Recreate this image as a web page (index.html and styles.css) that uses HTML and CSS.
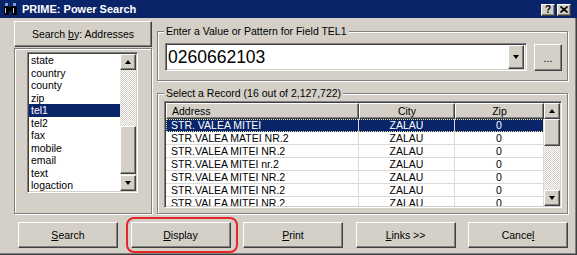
FILE: index.html
```html
<!DOCTYPE html>
<html lang="en">
<head>
    <meta charset="UTF-8">
    <title>PRIME: Power Search</title>
    <link rel="stylesheet" href="styles.css">
</head>
<body>
    <div class="window">
        <div class="titlebar">
            <svg class="app-icon" viewBox="0 0 15 14">
                <rect x="1" y="4" width="5" height="9" rx="1" fill="#000"/>
                <rect x="9" y="4" width="5" height="9" rx="1" fill="#000"/>
                <rect x="5" y="5" width="5" height="4" fill="#000"/>
                <rect x="2" y="1" width="3" height="3" fill="#7d9be0"/>
                <rect x="10" y="1" width="3" height="3" fill="#7d9be0"/>
                <rect x="2" y="6" width="1" height="5" fill="#c8d4f0"/>
                <rect x="10" y="6" width="1" height="5" fill="#c8d4f0"/>
            </svg>
            <span class="title">PRIME: Power Search</span>
            <div class="caption-btns">
                <span class="cap-btn">?</span>
                <span class="cap-btn">
                    <svg width="8" height="7" viewBox="0 0 8 7"><path d="M0.5 0.5 L7.5 6.5 M7.5 0.5 L0.5 6.5" stroke="#000" stroke-width="1.6"/></svg>
                </span>
            </div>
        </div>

        <div class="content">
            <div class="left-col">
                <div class="btn raised search-by"><span>Search <u>b</u>y: Addresses</span></div>
                <div class="panel etched">
                    <div class="listbox sunken">
                        <ul class="items">
                            <li>state</li>
                            <li>country</li>
                            <li>county</li>
                            <li>zip</li>
                            <li class="sel">tel1</li>
                            <li>tel2</li>
                            <li>fax</li>
                            <li>mobile</li>
                            <li>email</li>
                            <li>text</li>
                            <li>logaction</li>
                        </ul>
                        <div class="vscroll">
                            <div class="sb-btn raised"><span class="arrow-up"></span></div>
                            <div class="sb-track thumb-bottom"><div class="sb-thumb raised left-thumb"></div></div>
                            <div class="sb-btn raised"><span class="arrow-down"></span></div>
                        </div>
                    </div>
                </div>
            </div>

            <div class="right-col">
                <div class="group etched value-group">
                    <div class="legend">Enter a Value or Pattern for Field TEL1</div>
                    <div class="value-row">
                        <div class="combo sunken">
                            <span class="combo-text">0260662103</span>
                            <span class="drop-btn raised"><span class="arrow-down"></span></span>
                        </div>
                        <div class="btn raised dots"><span>...</span></div>
                    </div>
                </div>

                <div class="group etched record-group">
                    <div class="legend">Select a Record (16 out of 2,127,722)</div>
                    <div class="listview sunken">
                        <div class="lv-body">
                            <table class="records">
                                <colgroup>
                                    <col class="c-address">
                                    <col class="c-city">
                                    <col class="c-zip">
                                </colgroup>
                                <thead>
                                    <tr><th class="left">Address</th><th>City</th><th>Zip</th></tr>
                                </thead>
                                <tbody>
                                    <tr class="sel"><td class="left">STR. VALEA MITEI</td><td>ZALAU</td><td>0</td></tr>
                                    <tr><td class="left">STR.VALEA MATEI NR.2</td><td>ZALAU</td><td>0</td></tr>
                                    <tr><td class="left">STR.VALEA MITEI NR.2</td><td>ZALAU</td><td>0</td></tr>
                                    <tr><td class="left">STR.VALEA MITEI nr.2</td><td>ZALAU</td><td>0</td></tr>
                                    <tr><td class="left">STR.VALEA MITEI NR.2</td><td>ZALAU</td><td>0</td></tr>
                                    <tr><td class="left">STR.VALEA MITEI NR.2</td><td>ZALAU</td><td>0</td></tr>
                                    <tr><td class="left">STR.VALEA MITEI NR.2</td><td>ZALAU</td><td>0</td></tr>
                                </tbody>
                            </table>
                        </div>
                        <div class="vscroll">
                            <div class="sb-btn raised"><span class="arrow-up"></span></div>
                            <div class="sb-track"><div class="sb-thumb raised lv-thumb"></div></div>
                            <div class="sb-btn raised"><span class="arrow-down"></span></div>
                        </div>
                    </div>
                </div>
            </div>
        </div>

        <div class="actions">
            <div class="btn raised action"><span><u>S</u>earch</span></div>
            <div class="btn raised action marked"><span><u>D</u>isplay</span></div>
            <div class="btn raised action"><span><u>P</u>rint</span></div>
            <div class="btn raised action"><span><u>L</u>inks &gt;&gt;</span></div>
            <div class="btn raised action"><span>Cance<u>l</u></span></div>
        </div>
    </div>
</body>
</html>
```

FILE: styles.css
```css
body {
    margin: 0;
    font-family: "Liberation Sans", Arial, sans-serif;
    font-size: 10.5px;
    color: #000;
}
.window {
    width: 577px;
    height: 255px;
    box-sizing: border-box;
    background-color: #d4d0c8;
    box-shadow: inset -1px -1px #404040, inset -2px -2px #808080;
    overflow: hidden;
}

/* title bar */
.titlebar {
    height: 18px;
    background-color: #0a246a;
    display: flex;
    align-items: center;
    padding: 0 6px 0 3px;
    color: white;
}
.app-icon {
    width: 15px;
    height: 14px;
    margin-right: 4px;
}
.title {
    flex: 1;
    font-weight: bold;
    font-size: 11px;
}
.caption-btns {
    display: flex;
    gap: 2px;
    margin-top: 1px;
}
.cap-btn {
    width: 14px;
    height: 12px;
    box-sizing: border-box;
    background-color: #d4d0c8;
    border: 1px solid;
    border-color: #fff #404040 #404040 #fff;
    box-shadow: inset -1px -1px #808080;
    display: flex;
    align-items: center;
    justify-content: center;
    color: #000;
    font-weight: bold;
    font-size: 10px;
}

/* 3d borders */
.raised {
    border: 1px solid;
    border-color: #fff #404040 #404040 #fff;
    box-shadow: inset -1px -1px #808080;
    background-color: #d4d0c8;
    box-sizing: border-box;
}
.sunken {
    border: 1px solid;
    border-color: #808080 #fff #fff #808080;
    box-shadow: inset 1px 1px #404040, inset -1px -1px #d4d0c8;
    padding: 1px;
    box-sizing: border-box;
    background-color: white;
}
.etched {
    border: 1px solid #808080;
    box-shadow: inset 1px 1px #fff, 1px 1px #fff;
    box-sizing: border-box;
}
.btn {
    display: flex;
    align-items: center;
    justify-content: center;
}

/* layout */
.content {
    display: flex;
    gap: 5px;
    padding: 3px 0 0 14px;
    height: 193px;
}
.left-col {
    width: 138px;
    display: flex;
    flex-direction: column;
}
.search-by {
    height: 26px;
}
.panel {
    margin-top: 1px;
    height: 166px;
    padding: 3px 0 0 12px;
}
.right-col {
    width: 411px;
}

/* left list */
.listbox {
    width: 111px;
    height: 141px;
    display: flex;
}
.items {
    list-style: none;
    margin: 0;
    padding: 0;
    flex: 1;
    overflow: hidden;
}
.items li {
    height: 12.5px;
    line-height: 12.5px;
    padding-left: 2px;
}
.items li.sel {
    background-color: #0a246a;
    color: white;
}

/* scrollbars */
.vscroll {
    width: 16px;
    display: flex;
    flex-direction: column;
}
.sb-btn {
    height: 16px;
    display: flex;
    align-items: center;
    justify-content: center;
}
.sb-track {
    flex: 1;
    display: flex;
    flex-direction: column;
    background-color: #fff;
    background-image: repeating-conic-gradient(#d4d0c8 0 25%, #fff 0 50%);
    background-size: 2px 2px;
}
.thumb-bottom {
    justify-content: flex-end;
}
.sb-thumb {
    width: 16px;
}
.left-thumb {
    height: 48px;
    margin-bottom: 1px;
}
.lv-thumb {
    height: 27px;
}
.arrow-up,
.arrow-down {
    width: 0;
    height: 0;
    border: solid transparent;
}
.arrow-up {
    border-width: 0 3.5px 4px;
    border-bottom-color: #000;
}
.arrow-down {
    border-width: 4px 3.5px 0;
    border-top-color: #000;
}

/* group boxes */
.group {
    padding: 0 6px 0 6px;
}
.legend {
    margin: -7px 0 0 0;
    padding: 0 2px;
    width: fit-content;
    height: 12px;
    line-height: 12px;
    background-color: #d4d0c8;
}
.value-group {
    margin-top: 10px;
    height: 50px;
}
.value-row {
    display: flex;
    gap: 7px;
    margin-top: 6px;
}
.combo {
    flex: 1;
    height: 28px;
    display: flex;
    align-items: center;
    margin-left: 1px;
}
.combo-text {
    flex: 1;
    padding-left: 1px;
    font-size: 17.5px;
}
.drop-btn {
    width: 16px;
    height: 24px;
    display: flex;
    align-items: center;
    justify-content: center;
    margin-right: 1px;
}
.dots {
    width: 28px;
    height: 27px;
    margin-top: 1px;
    margin-right: -1px;
}

.record-group {
    margin-top: 12px;
    height: 121px;
}
.listview {
    margin-top: 2px;
    height: 107px;
    width: 398px;
    display: flex;
}
.lv-body {
    flex: 1;
    overflow: hidden;
}
.records {
    width: 378px;
    table-layout: fixed;
    border-collapse: separate;
    border-spacing: 0;
}
.c-address { width: 193px; }
.c-city { width: 96px; }
.c-zip { width: 89px; }
.records th {
    height: 16px;
    box-sizing: border-box;
    padding: 0 4px;
    font-weight: normal;
    text-align: center;
    background-color: #d4d0c8;
    border: 1px solid;
    border-color: #fff #404040 #404040 #fff;
    box-shadow: inset -1px -1px #808080;
    line-height: 13px;
}
.records td {
    height: 13px;
    box-sizing: border-box;
    padding: 0 4px;
    line-height: 12px;
    text-align: center;
    white-space: nowrap;
    overflow: hidden;
    border-bottom: 1px solid #dcdad5;
    border-right: 1px solid #dcdad5;
}
.records .left {
    text-align: left;
    padding-left: 5px;
}
.records tr.sel td {
    background-color: #0a246a;
    color: white;
    border-bottom-color: #0a246a;
}
.records tr.sel {
    outline: 1px dotted #e8e8a0;
    outline-offset: -1px;
}

/* bottom buttons */
.actions {
    display: flex;
    justify-content: space-between;
    padding: 0 9px 0 18px;
    margin-top: 8px;
}
.action {
    width: 100px;
    height: 26px;
}
.marked {
    position: relative;
}
.marked::after {
    content: "";
    position: absolute;
    top: -6px;
    bottom: -6px;
    left: -6px;
    right: -8px;
    border: 2px solid #e8262a;
    border-radius: 8px;
}
```
